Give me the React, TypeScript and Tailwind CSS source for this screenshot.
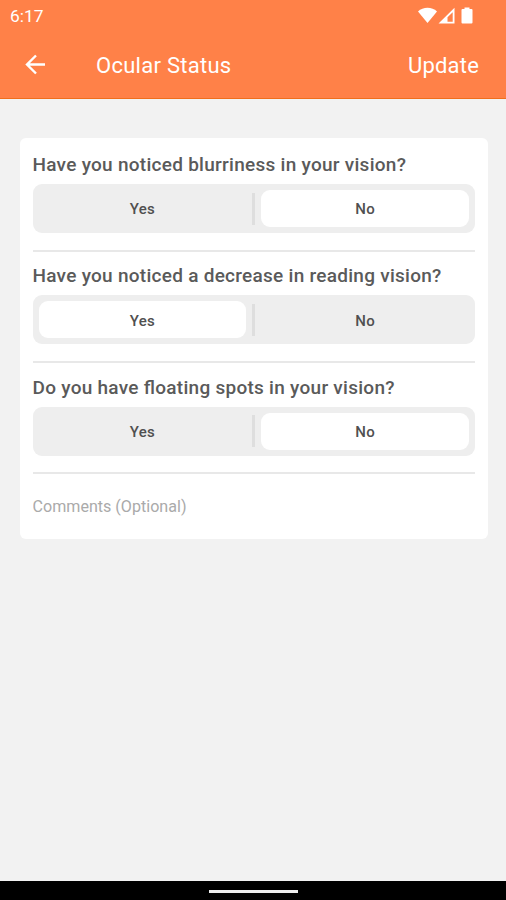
import { useState } from 'react';

type Answer = 'Yes' | 'No';

const QUESTIONS: { text: string; answer: Answer }[] = [
  { text: 'Have you noticed blurriness in your vision?', answer: 'No' },
  { text: 'Have you noticed a decrease in reading vision?', answer: 'Yes' },
  { text: 'Do you have floating spots in your vision?', answer: 'No' },
];

function StatusBar() {
  return (
    <div className="flex h-8 items-center justify-between pl-2.5 pr-8 text-white">
      <span className="text-[17.4px] leading-8">6:17</span>
      <svg width="57" height="18" viewBox="0 0 57 18" fill="currentColor" aria-hidden="true">
        <path d="M1 4.600C6 -0.400 15 -0.400 20 4.600L10.500 16Z" />
        <path fillRule="evenodd" d="M21.500 16.500L37.500 0.800V16.500ZM30.500 14.700H35.700V5.200L30.500 10.300Z" />
        <path d="M47.500 0.500h5v1.500h2q1 0 1 1v12.500q0 1 -1 1h-9q-1 0 -1 -1v-12.500q0 -1 1 -1h2Z" />
      </svg>
    </div>
  );
}

function Header() {
  return (
    <header className="h-[99px] shrink-0 border-b border-[#f06f1c] bg-[#ff8148] text-white">
      <StatusBar />
      <div className="flex h-[66px] items-center pl-6 pr-[27px]">
        <button type="button" aria-label="Back" className="mr-12">
          <svg width="24" height="24" viewBox="0 0 24 24" fill="none" stroke="currentColor" strokeWidth="2.4">
            <path d="M21 11.500H3M12 2.500L3 11.500l9 9" />
          </svg>
        </button>
        <h1 className="text-[22px] tracking-[0.27px]">Ocular Status</h1>
        <button type="button" className="ml-auto text-[22px] tracking-[0.2px]">Update</button>
      </div>
    </header>
  );
}

function Toggle({ value, onChange }: { value: Answer; onChange: (value: Answer) => void }) {
  const base = 'h-[37px] flex-1 rounded-[9px] pt-0.5 text-[15px] font-medium tracking-[0.2px] text-[#505050]';
  return (
    <div className="flex h-[49px] items-center rounded-[9px] bg-[#eeeeee] px-1.5">
      <button type="button" onClick={() => onChange('Yes')} className={value === 'Yes' ? `${base} bg-white` : base}>
        Yes
      </button>
      <div className="mx-1.5 h-8 w-[3px] bg-[#dedede]" />
      <button type="button" onClick={() => onChange('No')} className={value === 'No' ? `${base} bg-white` : base}>
        No
      </button>
    </div>
  );
}

export default function App() {
  const [answers, setAnswers] = useState<Answer[]>(QUESTIONS.map((q) => q.answer));

  return (
    <div className="flex h-[900px] w-[506px] flex-col bg-[#f2f2f2] font-['Roboto',sans-serif]">
      <Header />

      <main className="flex-1 pl-5 pr-[18px] pt-[39px]">
        <div className="h-[401px] rounded-md bg-white pl-[12.5px] pr-[13px] pt-[13px]">
          {QUESTIONS.map((question, i) => (
            <section key={question.text} className="mb-[10.5px] h-[100.8px] border-b-2 border-[#e8e8e8]">
              <h2 className="mb-[5px] text-[19px] leading-7 font-medium tracking-[0.27px] text-[#5a5a5a] [font-feature-settings:'liga']">
                {question.text}
              </h2>
              <Toggle
                value={answers[i]}
                onChange={(value) => setAnswers(answers.map((a, j) => (j === i ? value : a)))}
              />
            </section>
          ))}
          <input
            aria-label="Comments"
            placeholder="Comments (Optional)"
            className="mt-1 h-9 w-full text-[16.1px] text-[#5a5a5a] outline-none placeholder:text-[#aaaaaa]"
          />
        </div>
      </main>

      <footer className="flex h-[19px] shrink-0 justify-center bg-black pt-[9px]">
        <div className="h-[3px] w-[89px] bg-[#eeeeee]" />
      </footer>
    </div>
  );
}
